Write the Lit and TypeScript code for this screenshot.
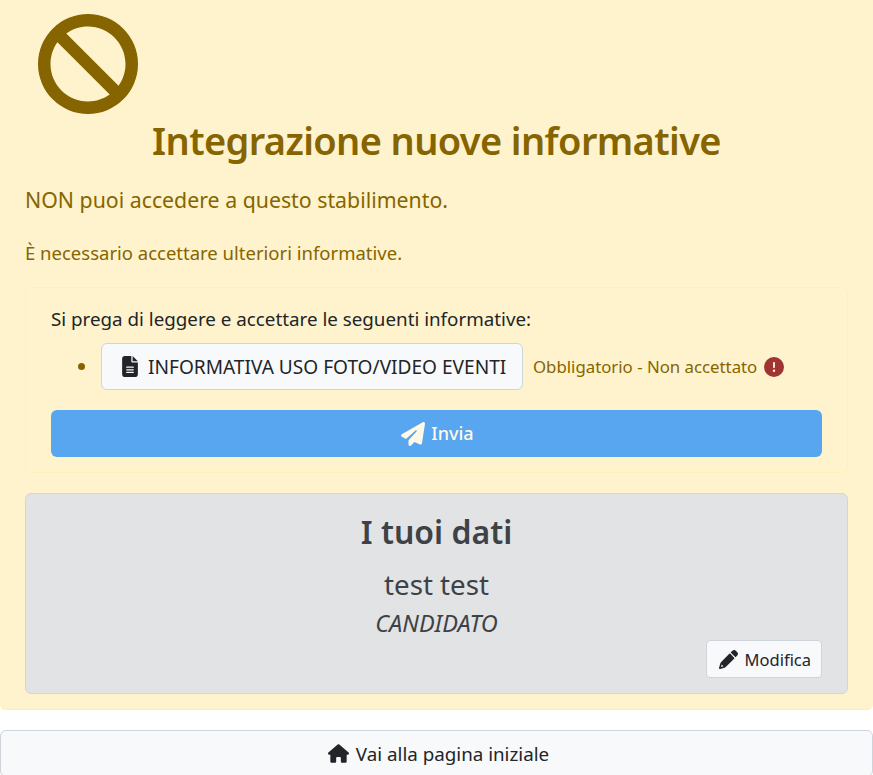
import { LitElement, html, css, svg } from "lit";
import { customElement } from "lit/decorators.js";

const icon = (vb: string, d: string, cls: string) =>
  html`<svg class="ico ${cls}" viewBox="${vb}" aria-hidden="true">${svg`<path fill="currentColor" fill-rule="evenodd" d="${d}"></path>`}</svg>`;

const BAN = "M367.2 412.5L99.5 144.8C77.1 176.1 64 214.5 64 256c0 106 86 192 192 192c41.5 0 79.9-13.1 111.2-35.5zm45.3-45.3C434.9 335.9 448 297.5 448 256c0-106-86-192-192-192c-41.5 0-79.9 13.1-111.2 35.5L412.5 367.2zM0 256a256 256 0 1 1 512 0A256 256 0 1 1 0 256z";
const FILE = "M64 0C28.7 0 0 28.7 0 64V448c0 35.3 28.7 64 64 64H320c35.3 0 64-28.7 64-64V160H256c-17.7 0-32-14.3-32-32V0H64zM256 0V128H384L256 0zM112 256H272c8.8 0 16 7.2 16 16s-7.2 16-16 16H112c-8.8 0-16-7.2-16-16s7.2-16 16-16zm0 64H272c8.8 0 16 7.2 16 16s-7.2 16-16 16H112c-8.8 0-16-7.2-16-16s7.2-16 16-16zm0 64H272c8.8 0 16 7.2 16 16s-7.2 16-16 16H112c-8.8 0-16-7.2-16-16s7.2-16 16-16z";
const PLANE = "M498.1 5.6c10.1 7 15.4 19.1 13.5 31.2l-64 416c-1.5 9.7-7.4 18.2-16 23s-18.9 5.4-28 1.6L284 427.7l-68.5 74.1c-8.9 9.7-22.9 12.9-35.2 8.1S160 493.2 160 480V396.4c0-4 1.5-7.8 4.2-10.7L331.8 202.8c5.8-6.3 5.6-16-.4-22s-15.7-6.4-22-.7L106 360.8 17.7 316.6C7.1 311.3 .3 300.7 0 288.9s5.9-22.8 16.1-28.7l448-256c10.7-6.1 23.9-5.5 34 1.4z";
const EXCL = "M256 512A256 256 0 1 0 256 0a256 256 0 1 0 0 512zm0-384c13.3 0 24 10.7 24 24V264c0 13.3-10.7 24-24 24s-24-10.7-24-24V152c0-13.3 10.7-24 24-24zM224 352a32 32 0 1 1 64 0 32 32 0 1 1 -64 0z";
const PENCIL = "M410.3 231l11.3-11.3-33.9-33.9-62.1-62.1L291.7 89.8l-11.3 11.3-22.6 22.6L58.6 322.9c-10.4 10.4-18 23.3-22.2 37.4L1 480.7c-2.5 8.4-.2 17.5 6.1 23.7s15.3 8.5 23.7 6.1l120.3-35.4c14.1-4.2 27-11.8 37.4-22.2L387.7 253.7 410.3 231zM56 456l18-62 44 44zM362.7 18.7L348.3 33.2 325.7 55.8 314.3 67.1l33.9 33.9 62.1 62.1 33.9 33.9 11.3-11.3 22.6-22.6 14.5-14.5c25-25 25-65.5 0-90.5L453.3 18.7c-25-25-65.5-25-90.5 0z";
const HOME = "M575.8 255.5c0 18-15 32.1-32 32.1h-32l.7 160.2c0 2.7-.2 5.4-.5 8.1V472c0 22.1-17.9 40-40 40H456c-1.1 0-2.2 0-3.3-.1c-1.4 .1-2.8 .1-4.2 .1H416 392c-22.1 0-40-17.9-40-40V448 384c0-17.7-14.3-32-32-32H256c-17.7 0-32 14.3-32 32v64 24c0 22.1-17.9 40-40 40H160 128.1c-1.5 0-3-.1-4.5-.2c-1.2 .1-2.4 .2-3.6 .2H104c-22.1 0-40-17.9-40-40V360c0-.9 0-1.9 .1-2.8V287.6H32c-18 0-32-14-32-32.1c0-9 3-17 10-24L266.4 8c7-7 15-8 22-8s15 2 21 7L564.8 231.5c8 7 12 15 11 24z";

@customElement("app-root")
export class AppRoot extends LitElement {
  static styles = css`
    :host {
      display: block;
      height: 775px;
      overflow: hidden;
      font-family: "Noto Sans", "Open Sans", sans-serif;
      font-size: 18px;
      line-height: 27px;
      color: #212529;
      background: #fff;
    }
    * { box-sizing: border-box; }
    .ico { display: inline-block; flex: none; }
    .alert {
      height: 710px;
      background: #fff3cd;
      border-radius: 0 0 6px 6px;
      border-bottom: 1px solid #ffecb5;
      color: #866500;
      padding: 14px 25px 0;
    }
    .ban { display: block; width: 100px; height: 100px; margin-left: 13px; }
    h1 {
      margin: 0;
      font-size: 38px;
      line-height: 53px;
      font-weight: 600;
      text-align: center;
      letter-spacing: -0.63px;
    }
    .lead { margin: 18px 0 0; font-size: 21.3px; line-height: 30px; height: 30px; }
    .need { margin: 24px 0 0; font-size: 18.5px; height: 27px; }
    .card {
      margin-top: 21px;
      height: 186px;
      border: 1px solid #ffefc0;
      border-radius: 6px;
      padding: 18px 25px 0;
    }
    .ask { color: #212529; font-size: 18.8px; height: 27px; }
    .row {
      display: flex;
      align-items: center;
      height: 47px;
      margin-top: 10px;
      padding-left: 27px;
    }
    .dot { width: 7px; height: 7px; border-radius: 50%; background: #866500; margin-right: 16px; }
    .doc {
      display: flex;
      align-items: center;
      gap: 10px;
      width: 422px;
      height: 47px;
      padding-left: 20px;
      background: #f8f9fa;
      border: 1px solid #ced4da;
      border-radius: 6px;
      color: #212529;
      font-size: 19.1px;
      white-space: nowrap;
    }
    .doc span { padding-top: 2px; }
    .file { width: 16px; height: 21px; }
    .status {
      margin-left: 10px;
      font-size: 16.8px;
      white-space: nowrap;
    }
    .excl { width: 20px; height: 20px; margin-left: 7px; color: #a03333; }
    .send {
      display: flex;
      align-items: center;
      justify-content: center;
      gap: 6px;
      height: 47px;
      margin-top: 20px;
      padding-left: 2px;
      background: #58a5f0;
      border-radius: 6px;
      color: #fff9e8;
      font-weight: 500;
    }
    .plane { width: 24px; height: 24px; }
    .data {
      margin-top: 20px;
      height: 201px;
      background: #e2e3e5;
      border: 1px solid #d3d6d8;
      border-radius: 6px;
      color: #3d4246;
      padding: 14px 25px 0;
      text-align: center;
    }
    h2 { margin: 0; font-size: 32px; line-height: 48px; font-weight: 600; }
    .name { margin-top: 8px; font-size: 27.7px; line-height: 40px; }
    .role { margin-top: 3px; font-size: 23.5px; line-height: 32px; font-style: italic; }
    .actions { display: flex; justify-content: flex-end; margin-top: 1px; }
    .edit {
      display: flex;
      align-items: center;
      gap: 7px;
      height: 38px;
      padding: 0 10px 0 12px;
      background: #f8f9fa;
      border: 1px solid #ced4da;
      border-radius: 4px;
      color: #212529;
      font-size: 16.5px;
    }
    .pencil { width: 19px; height: 19px; }
    .home {
      display: flex;
      align-items: center;
      justify-content: center;
      gap: 7px;
      height: 47px;
      margin-top: 20px;
      padding-left: 4px;
      background: #f8f9fa;
      border: 1px solid #ced4da;
      border-radius: 6px;
      color: #212529;
      font-size: 18.8px;
    }
    .home span { padding-top: 1px; }
    .house { width: 21px; height: 21px; }
  `;

  render() {
    return html`
      <section class="alert">
        ${icon("0 0 512 512", BAN, "ban")}
        <h1>Integrazione nuove informative</h1>
        <p class="lead">NON puoi accedere a questo stabilimento.</p>
        <p class="need">È necessario accettare ulteriori informative.</p>
        <div class="card">
          <div class="ask">Si prega di leggere e accettare le seguenti informative:</div>
          <div class="row">
            <span class="dot"></span>
            <div class="doc">${icon("0 0 384 512", FILE, "file")}<span>INFORMATIVA USO FOTO/VIDEO EVENTI</span></div>
            <span class="status">Obbligatorio - Non accettato</span>
            ${icon("0 0 512 512", EXCL, "excl")}
          </div>
          <div class="send">${icon("0 0 512 512", PLANE, "plane")}<span>Invia</span></div>
        </div>
        <div class="data">
          <h2>I tuoi dati</h2>
          <div class="name">test test</div>
          <div class="role">CANDIDATO</div>
          <div class="actions">
            <div class="edit">${icon("0 0 512 512", PENCIL, "pencil")}<span>Modifica</span></div>
          </div>
        </div>
      </section>
      <div class="home">${icon("0 0 576 512", HOME, "house")}<span>Vai alla pagina iniziale</span></div>
    `;
  }
}
